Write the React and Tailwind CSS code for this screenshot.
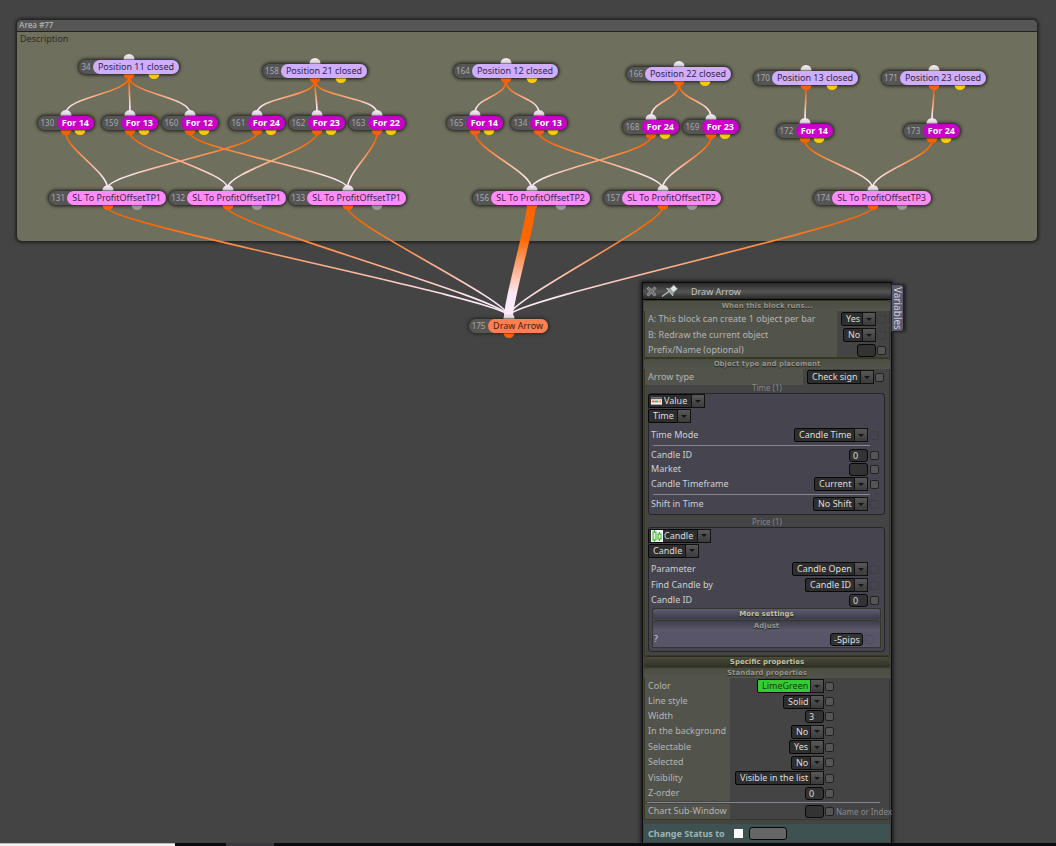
import React from 'react';

const NODE_COLORS = {
  position: 'bg-[#cfaeff] text-[#33233f]',
  filter: 'bg-[#c900c9] text-white font-bold',
  stop: 'bg-[#ff8cff] text-[#3d1f3d]',
  draw: 'bg-[#ff7f50] text-[#40200f]',
};

const NODES = [
  { id: 34, x: 79, y: 60, w: 100, type: 'position', label: 'Position 11 closed' },
  { id: 158, x: 263, y: 64, w: 104, type: 'position', label: 'Position 21 closed' },
  { id: 164, x: 454, y: 64, w: 104, type: 'position', label: 'Position 12 closed' },
  { id: 166, x: 627, y: 67, w: 104, type: 'position', label: 'Position 22 closed' },
  { id: 170, x: 754, y: 71, w: 104, type: 'position', label: 'Position 13 closed' },
  { id: 171, x: 882, y: 71, w: 104, type: 'position', label: 'Position 23 closed' },
  { id: 130, x: 38, y: 116, w: 56, type: 'filter', label: 'For 14' },
  { id: 159, x: 102, y: 116, w: 56, type: 'filter', label: 'For 13' },
  { id: 160, x: 162, y: 116, w: 56, type: 'filter', label: 'For 12' },
  { id: 161, x: 229, y: 116, w: 56, type: 'filter', label: 'For 24' },
  { id: 162, x: 289, y: 116, w: 56, type: 'filter', label: 'For 23' },
  { id: 163, x: 349, y: 116, w: 56, type: 'filter', label: 'For 22' },
  { id: 165, x: 447, y: 116, w: 56, type: 'filter', label: 'For 14' },
  { id: 134, x: 511, y: 116, w: 56, type: 'filter', label: 'For 13' },
  { id: 168, x: 623, y: 120, w: 56, type: 'filter', label: 'For 24' },
  { id: 169, x: 683, y: 120, w: 56, type: 'filter', label: 'For 23' },
  { id: 172, x: 777, y: 124, w: 56, type: 'filter', label: 'For 14' },
  { id: 173, x: 904, y: 124, w: 56, type: 'filter', label: 'For 24' },
  { id: 131, x: 49, y: 191, w: 117, type: 'stop', label: 'SL To ProfitOffsetTP1' },
  { id: 132, x: 169, y: 191, w: 117, type: 'stop', label: 'SL To ProfitOffsetTP1' },
  { id: 133, x: 289, y: 191, w: 117, type: 'stop', label: 'SL To ProfitOffsetTP1' },
  { id: 156, x: 473, y: 191, w: 117, type: 'stop', label: 'SL To ProfitOffsetTP2' },
  { id: 157, x: 604, y: 191, w: 117, type: 'stop', label: 'SL To ProfitOffsetTP2' },
  { id: 174, x: 814, y: 191, w: 117, type: 'stop', label: 'SL To ProfitOffsetTP3' },
  { id: 175, x: 469, y: 319, w: 79, type: 'draw', label: 'Draw Arrow' },
];

const WIRES = [
  [34, 130], [34, 159], [34, 160],
  [158, 161], [158, 162], [158, 163],
  [164, 165], [164, 134],
  [166, 168], [166, 169],
  [170, 172], [171, 173],
  [130, 131], [161, 131],
  [159, 132], [162, 132],
  [160, 133], [163, 133],
  [165, 156], [168, 156],
  [134, 157], [169, 157],
  [172, 174], [173, 174],
  [131, 175], [132, 175], [133, 175], [157, 175], [174, 175], [156, 175],
];

const Wire = ({ from, to }) => {
  const a = NODES.find((n) => n.id === from);
  const b = NODES.find((n) => n.id === to);
  const thick = from === 156;
  const x1 = a.x + a.w / 2;
  const x2 = b.x + b.w / 2;
  const y1 = a.y + (thick ? 14 : 17);
  const y2 = b.y - 3;
  const gradient = `wire-${from}-${to}`;
  return (
    <g>
      <linearGradient id={gradient} gradientUnits="userSpaceOnUse" x1="0" y1={y1} x2="0" y2={y2}>
        <stop offset={thick ? '0.3' : '0.15'} stopColor="#ff6600" />
        <stop offset={thick ? '0.8' : '0.85'} stopColor="#fdeaf8" />
      </linearGradient>
      <path
        d={`M${x1} ${y1} C${x1} ${y1 + 16} ${x2} ${y2 - 16} ${x2} ${y2}`}
        fill="none"
        stroke={`url(#${gradient})`}
        strokeWidth={thick ? 9 : 1.6}
      />
    </g>
  );
};

const Node = ({ node }) => {
  const port = 'absolute size-[11px] -translate-x-1/2 rounded-full';
  return (
    <div className="absolute h-[14px]" style={{ left: node.x, top: node.y, width: node.w }}>
      <span className="absolute inset-0 rounded-full shadow-[0_0_3px_2px_rgba(45,45,40,0.75)]" />
      <span className={`${port} -top-[6px] left-1/2 bg-linear-to-b from-[#fbeefb] to-[#aaa]`} />
      <span className={`${port} -bottom-[5px] left-1/2 bg-[#ff6000]`} />
      {node.type !== 'draw' && (
        <span className={`${port} -bottom-[5px] left-3/4 ${node.type === 'stop' ? 'bg-[#999]' : 'bg-[#ffcc00]'}`} />
      )}
      <div className="relative flex h-full items-center rounded-full bg-[#555] shadow-[0_0_1px_1px_rgba(45,45,40,0.5)]">
        <span className="flex-1 text-center text-[8px] leading-none text-[#aaa]">{node.id}</span>
        <span className={`h-full rounded-full px-[5px] text-[9px] leading-[14px] whitespace-nowrap ${NODE_COLORS[node.type]}`}>
          {node.label}
        </span>
      </div>
    </div>
  );
};

const Select = ({ id, value, width, icon, className = 'bg-[#2e2e2e] text-[#ddd]' }) => (
  <span className={`relative flex h-[14px] shrink-0 ${width}`}>
    <select
      id={id}
      aria-label={value}
      className={`h-full w-full appearance-none rounded-l-[2px] border border-[#080808] pr-[13px] text-[9px] leading-[12px] outline-none ${icon ? 'pl-[15px]' : 'pl-1'} ${className}`}
    >
      <option>{value}</option>
    </select>
    {icon && <span className="pointer-events-none absolute inset-y-px left-[3px] flex items-center">{icon}</span>}
    <span className="pointer-events-none absolute inset-y-0 right-0 flex w-[14px] items-center justify-center border border-[#111] bg-linear-to-b from-[#585858] to-[#3c3c3c]">
      <svg width="6" height="3" viewBox="0 0 6 3">
        <path d="M0 0h6L3 3z" fill="#141414" />
      </svg>
    </span>
  </span>
);

const TextBox = ({ id, value = '', width = 'w-[19px]', label }) => (
  <input
    id={id}
    aria-label={label}
    defaultValue={value}
    className={`h-[13px] shrink-0 rounded-[3px] border border-[#080808] bg-[#333] pl-[3px] text-[9px] leading-[11px] text-[#ddd] outline-none ${width}`}
  />
);

const Tick = ({ faint, label }) => (
  <input
    type="checkbox"
    aria-label={label}
    className={`size-[9px] shrink-0 appearance-none rounded-[2px] border ${faint ? 'border-black/10' : 'border-[#222] bg-[#555]'}`}
  />
);

const Heading = ({ children, className = 'border-[#37381f] from-[#4c4d42] to-[#53544a] text-[#96968a]' }) => (
  <h3 className={`h-[11px] rounded-t-[3px] border-t bg-linear-to-b text-center font-['DejaVu_Sans'] text-[7px] leading-[10px] font-bold [text-shadow:0_1px_1px_#222] ${className}`}>
    {children}
  </h3>
);

/* One labelled setting: caption, control and the little override tick box */
const Row = ({ id, label, height = 'h-4', caption = '', side = 'gap-px pr-[3px]', faint, noTick, children }) => (
  <div className={`flex ${height}`}>
    <label htmlFor={id} className={`flex items-center pb-[2px] pl-[3px] whitespace-nowrap ${caption}`}>{label}</label>
    <div className={`ml-auto flex items-center ${side}`}>
      {children}
      {!noTick && <Tick faint={faint} label={`Override ${label}`} />}
    </div>
  </div>
);

const OLIVE = 'bg-[#52534b] text-[#b4b4b4]';
const INNER = 'gap-[2px] pr-[5px]';
const STANDARD = 'gap-px pr-[55px]';

const ValueIcon = () => (
  <svg width="11" height="10" viewBox="0 0 12 10">
    <rect y="1" width="12" height="8" fill="#eee" />
    <path d="M0 1h12v2H0z" fill="#555" />
    <path d="M1 5.500h3" stroke="#e0604a" strokeWidth="2" />
    <path d="M4.500 5.500h3" stroke="#48a868" strokeWidth="2" />
    <path d="M8 5.500h3" stroke="#e89060" strokeWidth="2" />
  </svg>
);

const CandleIcon = () => (
  <svg width="12" height="12" viewBox="0 0 12 12">
    <rect width="12" height="12" fill="#f4f4f4" />
    <path d="M3.500 0v2M3.500 10v1.500M8.500 2v2M8.500 9v2" stroke="#3a3" />
    <rect x="2" y="2" width="3" height="8" fill="#dfffd0" stroke="#2fae22" />
    <rect x="7" y="4" width="3" height="5" fill="#dfffd0" stroke="#2fae22" />
  </svg>
);

const Divider = ({ className }) => <hr className={`border-t border-[#858590] ${className}`} />;

const SettingsPanel = () => (
  <section className="absolute top-[282px] left-[642px] w-[250px] border border-[#0c0c0c] bg-[#444] text-[9px] leading-none text-[#d0d0d0] shadow-[0_0_4px_1px_#111]">
    <header className="flex h-[17px] items-center border-b border-black bg-linear-to-b from-[#2a2a2a] via-[#555] via-55% to-[#282828] pl-[3px]">
      <button type="button" aria-label="Close" className="flex">
        <svg width="11" height="11" viewBox="0 0 11 11">
          <path d="M1.500 1.500l8 8M9.500 1.500l-8 8" stroke="#999" strokeWidth="3" />
          <path d="M2 2l7 7M9 2l-7 7" stroke="#666" strokeWidth="1.200" />
        </svg>
      </button>
      <button type="button" aria-label="Pin" className="ml-1 flex">
        <svg width="18" height="14" viewBox="0 0 18 14">
          <path d="M1 12.500L8 7.500" stroke="#bbb" strokeWidth="1.300" />
          <path d="M5.500 4l6.500 8 1-3.500 1.500-2L17 5l-4.500-4.500L10.500 3 8.500 4.500z" fill="#98a0a0" />
          <path d="M9.500 4.500l3.500-3 3 3.500-3.500 3z" fill="#dde4e4" />
          <path d="M5.500 4l6.500 8" stroke="#c0c8c8" />
        </svg>
      </button>
      <h2 className="pl-3 text-[9px] text-[#c4c4c4]">Draw Arrow</h2>
    </header>

    <div className="px-px">
      <Heading>When this block runs...</Heading>
      <div className="border-x border-b border-[#383922]">
        <Row id="once" label="A: This block can create 1 object per bar" caption={`${OLIVE} w-[192px]`} faint>
          <Select id="once" value="Yes" width="w-[35px]" />
        </Row>
        <Row id="redraw" label="B: Redraw the current object" caption={`${OLIVE} w-[192px]`} faint>
          <Select id="redraw" value="No" width="w-[33px]" />
        </Row>
        <Row id="prefix" label="Prefix/Name (optional)" height="h-[14px]" caption={`${OLIVE} w-[192px]`}>
          <TextBox id="prefix" />
        </Row>
      </div>
      <Heading>Object type and placement</Heading>
      <div className="border-x border-b border-[#383922] pb-[3px]">
        <Row id="arrow" label="Arrow type" caption={`${OLIVE} w-[158px]`} side="gap-px pr-[5px]">
          <Select id="arrow" value="Check sign" width="w-[67px]" />
        </Row>

        <h4 className="h-2 text-center text-[8px] leading-[6px] text-[#888]">Time (1)</h4>
        <div className="mr-1 ml-[3px] rounded-[3px] border border-[#24242a] bg-[#45444f] pb-[2px]">
          <div className="-ml-px flex h-[15px] items-start">
            <Select value="Value" width="w-[57px]" icon={<ValueIcon />} />
          </div>
          <div className="-ml-px flex h-[15px] items-start">
            <Select value="Time" width="w-[43px]" />
          </div>
          <div className="pt-[3px]">
            <Row id="mode" label="Time Mode" side={INNER} faint caption="-ml-px">
              <Select id="mode" value="Candle Time" width="w-[74px]" />
            </Row>
          </div>
          <Divider className="mt-[2px] mr-[14px] mb-[2px] ml-1" />
          <Row id="candle-id" label="Candle ID" height="h-[14px]" side={INNER} caption="-ml-px">
            <TextBox id="candle-id" value="0" />
          </Row>
          <Row id="market" label="Market" height="h-[14px]" side={INNER} caption="-ml-px">
            <TextBox id="market" />
          </Row>
          <Row id="timeframe" label="Candle Timeframe" side={INNER} caption="-ml-px">
            <Select id="timeframe" value="Current" width="w-[54px]" />
          </Row>
          <Divider className="mt-[2px] mr-[14px] mb-px ml-1" />
          <Row id="shift" label="Shift in Time" side={INNER} faint caption="-ml-px">
            <Select id="shift" value="No Shift" width="w-[55px]" />
          </Row>
        </div>

        <h4 className="h-3 text-center text-[8px] leading-[14px] text-[#888]">Price (1)</h4>
        <div className="mr-1 ml-[3px] rounded-[3px] border border-[#24242a] bg-[#45444f] pb-[3px]">
          <div className="-ml-px flex h-[15px] items-center">
            <Select value="Candle" width="w-[63px]" icon={<CandleIcon />} />
          </div>
          <div className="-ml-px flex h-[15px] items-center">
            <Select value="Candle" width="w-[51px]" />
          </div>
          <div className="pt-[3px]">
            <Row id="parameter" label="Parameter" side={INNER} faint caption="-ml-px">
              <Select id="parameter" value="Candle Open" width="w-[76px]" />
            </Row>
          </div>
          <Row id="find" label="Find Candle by" side={INNER} faint caption="-ml-px">
            <Select id="find" value="Candle ID" width="w-[63px]" />
          </Row>
          <Row id="price-candle" label="Candle ID" height="h-[14px]" side={INNER} caption="-ml-px">
            <TextBox id="price-candle" value="0" />
          </Row>
          <div className="mx-[3px] mt-px flex flex-col gap-px">
            <Heading className="border-x border-[#35352a] from-[#5c5b72] to-[#3d3c4c] text-[#c4c49c]">More settings</Heading>
            <div className="border-x border-b border-[#35352a] bg-[#575567]">
              <Heading className="border-[#35352a] from-[#3f3e4c] to-[#5c5a6c] text-[#96968e]">Adjust</Heading>
              <Row id="adjust" label="?" side="gap-[2px] pr-[6px]" faint caption="-ml-[2px]">
                <TextBox id="adjust" value="-5pips" width="w-[33px]" />
              </Row>
            </div>
          </div>
        </div>
      </div>

      <Heading className="border-[#2c2d1c] from-[#4a4b3c] to-[#303126] text-[#c4c49c]">Specific properties</Heading>
      <Heading>Standard properties</Heading>
      <div className="border-x border-b border-[#383922]">
        <Row id="color" label="Color" caption={`${OLIVE} w-[85px]`} side={STANDARD}>
          <Select id="color" value="LimeGreen" width="w-[67px]" className="bg-[#32cd32] text-[#123c12]" />
        </Row>
        <Row id="line" label="Line style" height="h-[15px]" caption={`${OLIVE} w-[85px]`} side={STANDARD}>
          <Select id="line" value="Solid" width="w-[41px]" />
        </Row>
        <Row id="width" label="Width" height="h-[15px]" caption={`${OLIVE} w-[85px]`} side={STANDARD}>
          <TextBox id="width" value="3" />
        </Row>
        <Row id="background" label="In the background" height="h-[15px]" caption={`${OLIVE} w-[85px]`} side={STANDARD}>
          <Select id="background" value="No" width="w-[33px]" />
        </Row>
        <Row id="selectable" label="Selectable" caption={`${OLIVE} w-[85px]`} side={STANDARD}>
          <Select id="selectable" value="Yes" width="w-[35px]" />
        </Row>
        <Row id="selected" label="Selected" height="h-[15px]" caption={`${OLIVE} w-[85px]`} side={STANDARD}>
          <Select id="selected" value="No" width="w-[33px]" />
        </Row>
        <Row id="visibility" label="Visibility" caption={`${OLIVE} w-[85px]`} side={STANDARD}>
          <Select id="visibility" value="Visible in the list" width="w-[89px]" />
        </Row>
        <Row id="z-order" label="Z-order" height="h-[15px]" caption={`${OLIVE} w-[85px]`} side={STANDARD}>
          <TextBox id="z-order" value="0" />
        </Row>
        <Divider className="my-px mr-[9px] ml-[2px]" />
        <Row id="window" label="Chart Sub-Window" height="h-[15px]" caption={`${OLIVE} w-[85px]`} side="gap-px" noTick>
          <TextBox id="window" />
          <Tick label="Override Chart Sub-Window" />
          <span className="w-[54px] pl-px text-[8px] whitespace-nowrap text-[#888]">Name or Index</span>
        </Row>
      </div>
      <div className="mt-1 flex h-[18px] items-center bg-[#3f5252] pl-1 text-[#9db4b4]">
        <label htmlFor="change-status" className="w-[86px] font-bold">Change Status to</label>
        <input id="change-status" type="checkbox" className="size-[9px] appearance-none bg-white" />
        <input aria-label="Status" className="ml-[6px] h-[13px] w-[38px] rounded-[3px] border border-[#080808] bg-[#666]" />
      </div>
      <div className="h-2" />
    </div>
    <button
      type="button"
      className="absolute top-px -right-[13px] h-[48px] w-[13px] rounded-r-[3px] border border-[#222] bg-[#5a596d] text-[10px] leading-[11px] text-[#d0d0d8] shadow-[2px_0_3px_#222] [writing-mode:vertical-rl]"
    >
      Variables
    </button>
  </section>
);

const App = () => {
  return (
    <div className="flex h-screen flex-col overflow-hidden bg-[#444] font-['Noto_Sans',sans-serif]">
      <main className="relative flex-1 overflow-hidden">
        {/* Group of blocks */}
        <section className="absolute top-[20px] right-[19px] left-[17px] h-[221px] rounded-[5px] bg-[#6e6f5d] shadow-[0_0_3px_2px_#222]">
          <h1 className="h-3 rounded-t-[5px] border-b border-[#222] bg-[#555] pl-[2px] text-[8px] leading-[10px] font-semibold text-[#aaa]">
            Area #77
          </h1>
          <p className="pl-[3px] text-[9px] leading-[14px] text-[#2d2e24]">Description</p>
        </section>

        <svg className="absolute inset-0 h-full w-full">
          {WIRES.map(([from, to]) => (
            <Wire key={`${from}-${to}`} from={from} to={to} />
          ))}
        </svg>
        {NODES.map((node) => (
          <Node key={node.id} node={node} />
        ))}

        <SettingsPanel />
      </main>

      {/* Bottom strip */}
      <footer className="flex h-[3px] shrink-0 bg-[#0a0b10]">
        <div className="w-[175px] border-t border-[#bbb] bg-[#f2f2f2]" />
        <div className="ml-[51px] w-[48px] bg-[#3a3a40]" />
      </footer>
    </div>
  );
};

export default App;
